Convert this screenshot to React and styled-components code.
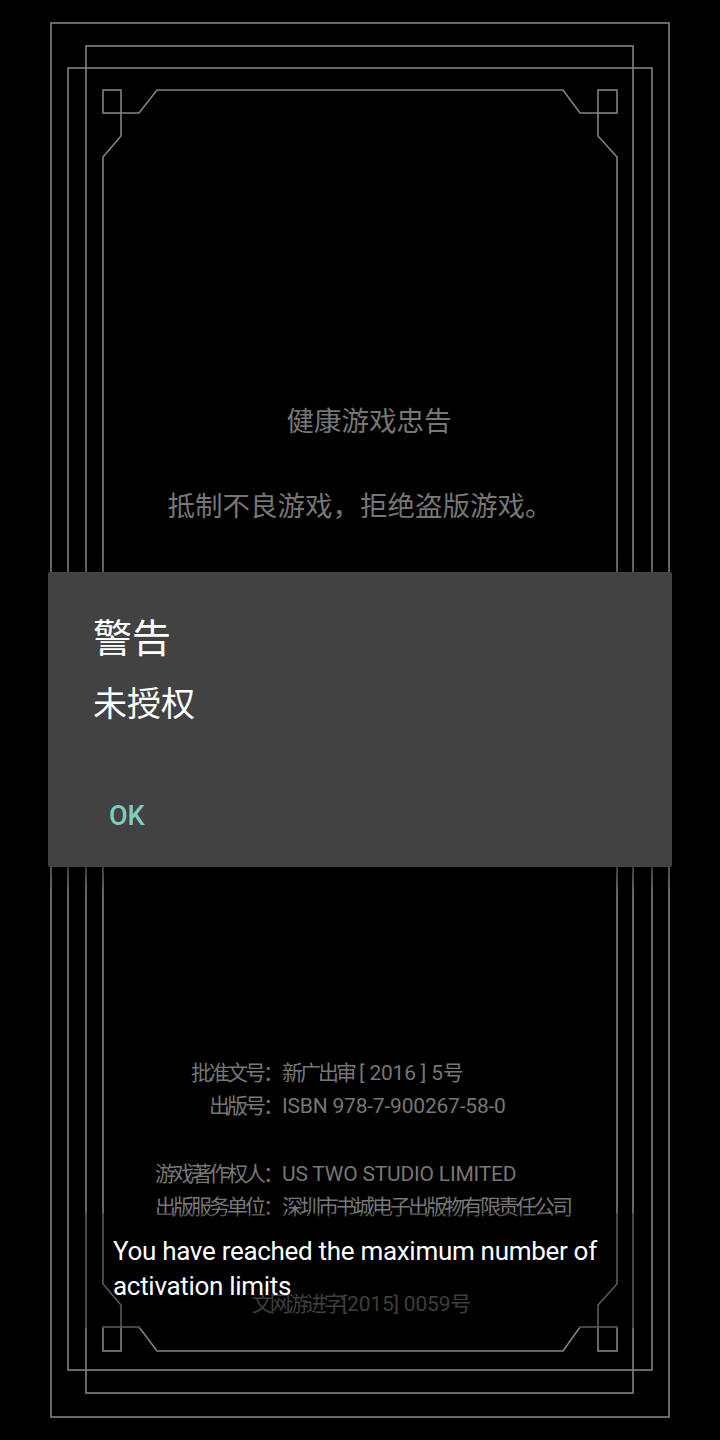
import React from "react";
import styled, { createGlobalStyle } from "styled-components";

const GlobalStyle = createGlobalStyle`
  html, body {
    margin: 0;
    padding: 0;
    background: #000;
  }
  body {
    font-family: "Roboto", "Noto Sans CJK SC", sans-serif;
  }
`;

const notices = [
  "健康游戏忠告",
  "抵制不良游戏，拒绝盗版游戏。",
  "注意自我保护，谨防受骗上当。",
  "适度游戏益脑，沉迷游戏伤身。",
  "合理安排时间，享受健康生活。",
  "",
];

function FrameArt() {
  return (
    <Art viewBox="0 0 720 1440" width="720" height="1440">
      <g fill="none" stroke="#828282" strokeWidth="1.6">
        <rect x="51" y="23" width="618" height="1394" />
        <rect x="86" y="46" width="547" height="1347" />
        <rect x="68" y="68" width="584" height="1302" />
        <path d="M157 90 H563 L580 113 H598 V136 L617 157 V1284 L598 1305 V1327 H580 L563 1351 H157 L139 1327 H121 V1305 L103 1284 V157 L121 136 V113 H139 Z" />
        <rect x="103" y="90" width="18" height="23" />
        <rect x="598" y="90" width="19" height="23" />
        <rect x="103" y="1327" width="18" height="24" />
        <rect x="598" y="1327" width="19" height="24" />
      </g>
    </Art>
  );
}

export default function App() {
  return (
    <>
      <GlobalStyle />
      <Stage>
        <FrameArt />
        <Content>
          <Notice>
            {notices.map((line, i) => (
              <NoticeLine key={i} heading={i === 0}>
                {line}
              </NoticeLine>
            ))}
          </Notice>
          <Credits>
            <Row>
              <Label>批准文号</Label>
              <Colon>：</Colon>
              <Value>
                新广出审<Lat> [ 2016 ] 5</Lat>号
              </Value>
            </Row>
            <Row>
              <Label>出版号</Label>
              <Colon>：</Colon>
              <Value>
                <Lat>ISBN 978-7-900267-58-0</Lat>
              </Value>
            </Row>
            <Row spaced>
              <Label>游戏著作权人</Label>
              <Colon>：</Colon>
              <Value>
                <Lat>US TWO STUDIO LIMITED</Lat>
              </Value>
            </Row>
            <Row>
              <Label>出版服务单位</Label>
              <Colon>：</Colon>
              <Value>深圳市书城电子出版物有限责任公司</Value>
            </Row>
          </Credits>
          <Licence>
            文网游进字<Lat>[2015] 0059</Lat>号
          </Licence>
        </Content>

        {/* alert dialog */}
        <Dialog>
          <DialogTitle>警告</DialogTitle>
          <DialogMessage>未授权</DialogMessage>
          <Actions>
            <TextButton>OK</TextButton>
          </Actions>
        </Dialog>

        {/* toast */}
        <Toast>You have reached the maximum number of activation limits</Toast>
      </Stage>
    </>
  );
}

const Stage = styled.div`
  position: relative;
  width: 720px;
  height: 1440px;
  overflow: hidden;
  background: #000;
  display: grid;
  grid-template: 1440px / 720px;
`;

const Art = styled.svg`
  grid-area: 1 / 1;
  display: block;
`;

const Content = styled.div`
  grid-area: 1 / 1;
  display: flex;
  flex-direction: column;
  align-items: center;
  padding-top: 377px;
  color: #767676;
`;

const Notice = styled.div`
  display: flex;
  flex-direction: column;
  align-items: center;
  font-family: "Noto Sans CJK SC", sans-serif;
  font-size: 27.5px;
  line-height: 85px;
`;

const NoticeLine = styled.div`
  height: 85px;
  white-space: nowrap;
  padding-left: ${(p) => (p.heading ? "18px" : "0")};
`;

const Credits = styled.div`
  align-self: flex-start;
  margin-left: 155px;
  margin-top: 170px;
  display: flex;
  flex-direction: column;
`;

const Row = styled.div`
  display: grid;
  grid-template-columns: 108px 18px auto;
  height: 33px;
  line-height: 33px;
  font-size: 21px;
  letter-spacing: -3px;
  white-space: nowrap;
  margin-top: ${(p) => (p.spaced ? "35px" : "0")};
`;

const Label = styled.span`
  justify-self: end;
`;

const Colon = styled.span`
  text-align: center;
  letter-spacing: 0;
`;

const Value = styled.span`
  padding-left: 1px;
`;

const Lat = styled.span`
  letter-spacing: -0.2px;
`;

const Licence = styled.div`
  margin-top: 64px;
  height: 33px;
  line-height: 33px;
  font-size: 21px;
  letter-spacing: -3px;
  white-space: nowrap;
  color: #5a5a5a;
`;

const Dialog = styled.div`
  position: absolute;
  left: 48px;
  top: 572px;
  width: 624px;
  height: 295px;
  box-sizing: border-box;
  padding: 39px 45px 33px;
  background: #424242;
  border-radius: 2px;
  box-shadow: 0 8px 24px rgba(0, 0, 0, 0.6);
  display: flex;
  flex-direction: column;
`;

const DialogTitle = styled.div`
  font-family: "Noto Sans CJK SC", sans-serif;
  font-size: 39px;
  line-height: 48px;
  color: #fff;
`;

const DialogMessage = styled.div`
  margin-top: 22px;
  font-family: "Noto Sans CJK SC", sans-serif;
  font-size: 34px;
  line-height: 42px;
  color: #fff;
`;

const Actions = styled.div`
  margin-top: auto;
  display: flex;
`;

const TextButton = styled.button`
  margin-left: 16px;
  padding: 0;
  border: none;
  background: transparent;
  font-family: "Roboto", sans-serif;
  font-weight: 500;
  font-size: 27px;
  line-height: 36px;
  color: #80cbc4;
`;

const Toast = styled.div`
  position: absolute;
  left: 76px;
  right: 70px;
  top: 1213px;
  box-sizing: border-box;
  padding: 21px 30px 24px 37px;
  background: rgba(0, 0, 0, 0.3);
  font-family: "Roboto", sans-serif;
  font-size: 26px;
  letter-spacing: -0.3px;
  line-height: 35px;
  color: #fff;
`;
